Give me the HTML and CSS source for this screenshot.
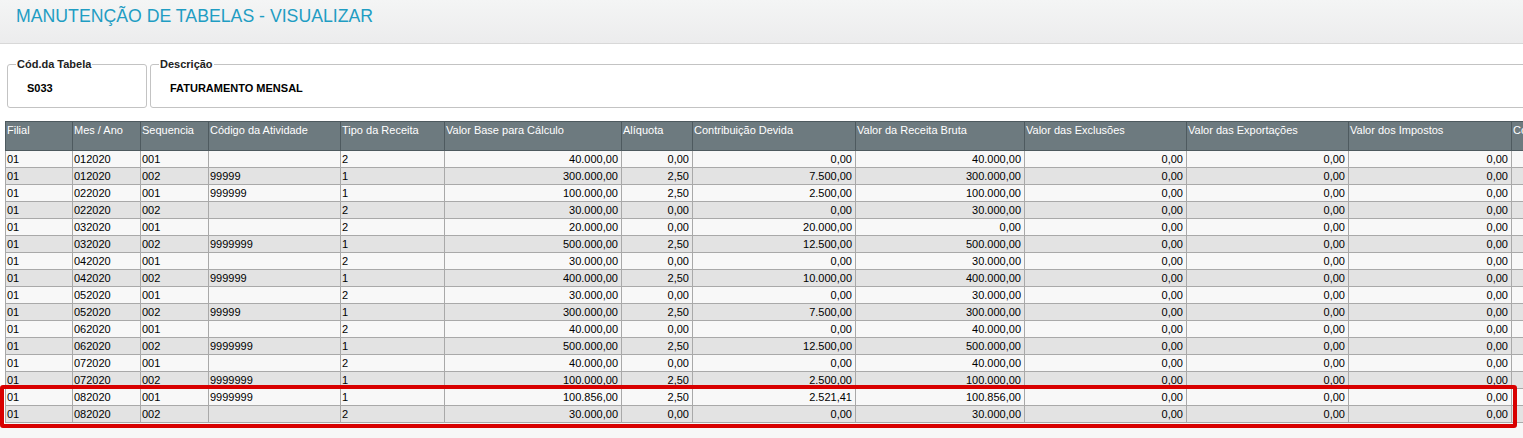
FILE: index.html
```html
<!DOCTYPE html>
<html lang="pt-BR">
<head>
<meta charset="utf-8">
<title>Manutenção de Tabelas - Visualizar</title>
<link rel="stylesheet" href="styles.css">
</head>
<body>
<header class="topbar">
  <h1 class="title">MANUTENÇÃO DE TABELAS - VISUALIZAR</h1>
</header>
<section class="fields">
  <fieldset class="field field-code">
    <legend>Cód.da Tabela</legend>
    <span class="value">S033</span>
  </fieldset>
  <fieldset class="field field-desc">
    <legend>Descrição</legend>
    <span class="value">FATURAMENTO MENSAL</span>
  </fieldset>
</section>
<div class="grid-wrap">
  <table class="grid">
    <colgroup>
      <col style="width:67px"><col style="width:68px"><col style="width:68px"><col style="width:132px"><col style="width:104px"><col style="width:177px"><col style="width:71px"><col style="width:163px"><col style="width:169px"><col style="width:162px"><col style="width:162px"><col style="width:163px"><col style="width:160px">
    </colgroup>
    <thead>
      <tr>
        <th>Filial</th><th>Mes / Ano</th><th>Sequencia</th><th>Código da Atividade</th><th>Tipo da Receita</th><th>Valor Base para Cálculo</th><th>Alíquota</th><th>Contribuição Devida</th><th>Valor da Receita Bruta</th><th>Valor das Exclusões</th><th>Valor das Exportações</th><th>Valor dos Impostos</th><th>Contribuição Ajustada</th>
      </tr>
    </thead>
    <tbody>
      <tr><td>01</td><td>012020</td><td>001</td><td></td><td>2</td><td class="n">40.000,00</td><td class="n">0,00</td><td class="n">0,00</td><td class="n">40.000,00</td><td class="n">0,00</td><td class="n">0,00</td><td class="n">0,00</td><td></td></tr>
      <tr><td>01</td><td>012020</td><td>002</td><td>99999</td><td>1</td><td class="n">300.000,00</td><td class="n">2,50</td><td class="n">7.500,00</td><td class="n">300.000,00</td><td class="n">0,00</td><td class="n">0,00</td><td class="n">0,00</td><td></td></tr>
      <tr><td>01</td><td>022020</td><td>001</td><td>999999</td><td>1</td><td class="n">100.000,00</td><td class="n">2,50</td><td class="n">2.500,00</td><td class="n">100.000,00</td><td class="n">0,00</td><td class="n">0,00</td><td class="n">0,00</td><td></td></tr>
      <tr><td>01</td><td>022020</td><td>002</td><td></td><td>2</td><td class="n">30.000,00</td><td class="n">0,00</td><td class="n">0,00</td><td class="n">30.000,00</td><td class="n">0,00</td><td class="n">0,00</td><td class="n">0,00</td><td></td></tr>
      <tr><td>01</td><td>032020</td><td>001</td><td></td><td>2</td><td class="n">20.000,00</td><td class="n">0,00</td><td class="n">20.000,00</td><td class="n">0,00</td><td class="n">0,00</td><td class="n">0,00</td><td class="n">0,00</td><td></td></tr>
      <tr><td>01</td><td>032020</td><td>002</td><td>9999999</td><td>1</td><td class="n">500.000,00</td><td class="n">2,50</td><td class="n">12.500,00</td><td class="n">500.000,00</td><td class="n">0,00</td><td class="n">0,00</td><td class="n">0,00</td><td></td></tr>
      <tr><td>01</td><td>042020</td><td>001</td><td></td><td>2</td><td class="n">30.000,00</td><td class="n">0,00</td><td class="n">0,00</td><td class="n">30.000,00</td><td class="n">0,00</td><td class="n">0,00</td><td class="n">0,00</td><td></td></tr>
      <tr><td>01</td><td>042020</td><td>002</td><td>999999</td><td>1</td><td class="n">400.000,00</td><td class="n">2,50</td><td class="n">10.000,00</td><td class="n">400.000,00</td><td class="n">0,00</td><td class="n">0,00</td><td class="n">0,00</td><td></td></tr>
      <tr><td>01</td><td>052020</td><td>001</td><td></td><td>2</td><td class="n">30.000,00</td><td class="n">0,00</td><td class="n">0,00</td><td class="n">30.000,00</td><td class="n">0,00</td><td class="n">0,00</td><td class="n">0,00</td><td></td></tr>
      <tr><td>01</td><td>052020</td><td>002</td><td>99999</td><td>1</td><td class="n">300.000,00</td><td class="n">2,50</td><td class="n">7.500,00</td><td class="n">300.000,00</td><td class="n">0,00</td><td class="n">0,00</td><td class="n">0,00</td><td></td></tr>
      <tr><td>01</td><td>062020</td><td>001</td><td></td><td>2</td><td class="n">40.000,00</td><td class="n">0,00</td><td class="n">0,00</td><td class="n">40.000,00</td><td class="n">0,00</td><td class="n">0,00</td><td class="n">0,00</td><td></td></tr>
      <tr><td>01</td><td>062020</td><td>002</td><td>9999999</td><td>1</td><td class="n">500.000,00</td><td class="n">2,50</td><td class="n">12.500,00</td><td class="n">500.000,00</td><td class="n">0,00</td><td class="n">0,00</td><td class="n">0,00</td><td></td></tr>
      <tr><td>01</td><td>072020</td><td>001</td><td></td><td>2</td><td class="n">40.000,00</td><td class="n">0,00</td><td class="n">0,00</td><td class="n">40.000,00</td><td class="n">0,00</td><td class="n">0,00</td><td class="n">0,00</td><td></td></tr>
      <tr><td>01</td><td>072020</td><td>002</td><td>9999999</td><td>1</td><td class="n">100.000,00</td><td class="n">2,50</td><td class="n">2.500,00</td><td class="n">100.000,00</td><td class="n">0,00</td><td class="n">0,00</td><td class="n">0,00</td><td></td></tr>
      <tr><td>01</td><td>082020</td><td>001</td><td>9999999</td><td>1</td><td class="n">100.856,00</td><td class="n">2,50</td><td class="n">2.521,41</td><td class="n">100.856,00</td><td class="n">0,00</td><td class="n">0,00</td><td class="n">0,00</td><td></td></tr>
      <tr><td>01</td><td>082020</td><td>002</td><td></td><td>2</td><td class="n">30.000,00</td><td class="n">0,00</td><td class="n">0,00</td><td class="n">30.000,00</td><td class="n">0,00</td><td class="n">0,00</td><td class="n">0,00</td><td></td></tr>
    </tbody>
  </table>
  <div class="grid-foot"></div>
  <div class="highlight"></div>
</div>
</body>
</html>
```

FILE: styles.css
```css
html, body {
  margin: 0;
  padding: 0;
  background: #ffffff;
  overflow: hidden;
  font-family: "Liberation Sans", Arial, sans-serif;
  color: #000;
}

.topbar {
  height: 43px;
  border-bottom: 1px solid #d8d8d8;
  background: linear-gradient(#f4f5f5, #ececed);
  padding-left: 16px;
  box-sizing: content-box;
}

.title {
  margin: 0;
  padding-top: 6px;
  font-weight: normal;
  font-size: 17.7px;
  line-height: 20px;
  color: #1f9dc3;
  white-space: nowrap;
}

.fields {
  display: flex;
  gap: 3px;
  padding: 14px 0 0 7px;
  width: 1700px;
}

.field {
  margin: 0;
  height: 50px;
  box-sizing: border-box;
  border: 1px solid #c3c3c3;
  border-radius: 3px;
  padding: 0 0 0 8px;
  display: flex;
  align-items: center;
}

.field legend {
  padding: 0 1px;
  font-size: 11px;
  font-weight: bold;
  color: #222;
  line-height: 12px;
}

.field-code {
  width: 140px;
}

.field-desc {
  width: 1420px;
}

.field .value {
  font-size: 11px;
  font-weight: bold;
  padding-left: 11px;
  margin-top: -2px;
}

.grid-wrap {
  position: relative;
  margin-top: 13px;
}

.grid {
  margin-left: 5px;
  border-collapse: collapse;
  table-layout: fixed;
  width: 1666px;
  font-size: 11px;
}

.grid th {
  background: #6d7a7f;
  color: #fff;
  font-weight: normal;
  text-align: left;
  vertical-align: top;
  height: 26px;
  padding: 2px 1px 0;
  line-height: 12px;
  border: 1px solid #4e5a5f;
  white-space: nowrap;
  overflow: hidden;
}

.grid td {
  height: 16px;
  padding: 0 1px;
  line-height: 16px;
  border: 1px solid #a9a9a9;
  white-space: nowrap;
  overflow: hidden;
}

.grid tbody tr:nth-child(odd) td {
  background: #f8f8f8;
}

.grid tbody tr:nth-child(even) td {
  background: #e3e3e3;
}

.grid td.n {
  text-align: right;
  padding-right: 3px;
}

.grid-foot {
  height: 40px;
  background: #f7f7f7;
}

.highlight {
  position: absolute;
  left: 0;
  top: 264px;
  width: 1517px;
  height: 43px;
  box-sizing: border-box;
  border: 4px solid #d80000;
  border-radius: 3px;
}
```
